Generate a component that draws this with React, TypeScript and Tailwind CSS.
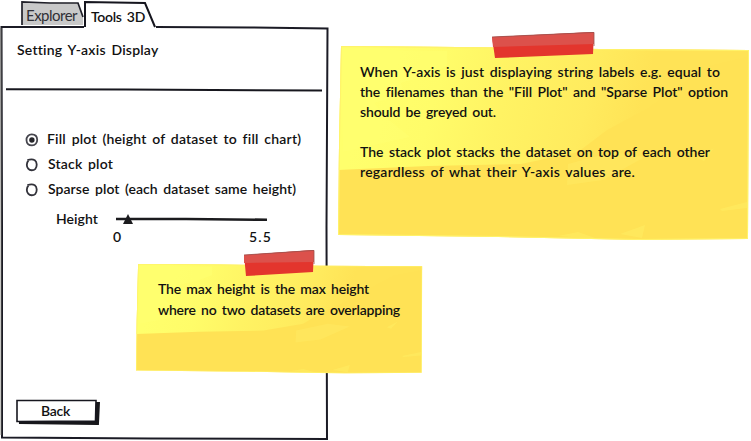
import { useLayoutEffect, useRef, useState, type ReactNode } from "react";

/* A single line of text tracked out to the given width. */
function Line({ w, className = "", children }: { w: number; className?: string; children: string }) {
  const ref = useRef<HTMLSpanElement>(null);
  const [tracking, setTracking] = useState(0);
  useLayoutEffect(() => {
    const natural = ref.current!.getBoundingClientRect().width;
    setTracking((t) => t + (w - natural) / children.length);
  }, [w, children]);
  return (
    <div className={`whitespace-nowrap ${className}`}>
      <span ref={ref} style={{ letterSpacing: tracking }}>{children}</span>
    </div>
  );
}

function Radio({ checked = false }: { checked?: boolean }) {
  return (
    <svg className="relative top-px h-[14px] w-[14px] shrink-0" viewBox="0 0 14 14" fill="none">
      {checked ? (
        <>
          <path d="M6.8 1.3C3.5 1.3 1.2 4 1.5 7.2c.2 3.2 2.4 5.2 5.5 5.2 3.2 0 5.3-2.5 5.2-5.6C12.1 3.5 10 1.3 6.800 1.3Z" stroke="#45454d" strokeWidth="1.8" />
          <circle cx="6.9" cy="7" r="2.7" fill="#25252a" />
        </>
      ) : (
        <path d="M2.4 2.200C5 1.2 8 1.100 9.800 2.200c2.300 1.700 2.500 6.300.6 8.600-2 2-5.500 1.900-7.200-.1C1.200 8.500 1.500 4.700 3.500 2.400" stroke="#33333b" strokeWidth="1.800" />
      )}
    </svg>
  );
}

function Note({ id, tape, className, children }: { id: string; tape: ReactNode; className: string; children: ReactNode }) {
  return (
    <section className={`relative ${className}`}>
      <svg className="absolute inset-0 h-full w-full overflow-visible" viewBox="0 0 412 195" preserveAspectRatio="none">
        <defs>
          <linearGradient id={`${id}-glow`} gradientUnits="userSpaceOnUse" x1="30" y1="40" x2="290" y2="110">
            <stop offset="0" stopColor="#ffff6c" />
            <stop offset="0.250" stopColor="#fffc69" />
            <stop offset="0.500" stopColor="#fff363" />
            <stop offset="0.800" stopColor="#ffeb5e" />
            <stop offset="1" stopColor="#ffe356" />
          </linearGradient>
          <clipPath id={`${id}-sheet`}>
            <path d="M3 0 120 1 262 3 411 4 410 193 300 194 160 191 0 189 1 100Z" />
          </clipPath>
        </defs>
        <g clipPath={`url(#${id}-sheet)`}>
          <rect width="412" height="195" fill="#ffe255" />
          <path d="M0 0H412V10L370 20 340 40 310 62 269 84 240 106 183 118 90 120 0 124Z" fill={`url(#${id}-glow)`} />
          <path d="M3 3 109 5 109 20 90 29 63 37 66 49 36 57 50 73 72 91 41 98 5 106Z" fill="#ffff70" fillOpacity="0.6" />
          <path d="M230 118 275 106 307 111 265 134 229 139Z" fill="#ffe961" fillOpacity="0.6" />
          <path d="M382 163 409 156 409 162 384 165ZM282 188 307 179 304 192ZM220 190 240 186 260 193ZM360 112 376 102 366 115Z" fill="#ffec61" fillOpacity="0.6" />
          <path d="M3 0 1 100 0 189 160 191 300 194 410 193 411 4 262 3Z" fill="none" stroke="#fff36b" strokeWidth="2" />
        </g>
      </svg>
      {tape}
      <div className="relative">{children}</div>
    </section>
  );
}

export default function App() {
  return (
    <main className="relative flex h-[441px] w-[751px] overflow-hidden bg-white font-['Lato','Open_Sans',sans-serif] text-[14px] leading-5 font-semibold text-[#111] [word-spacing:2px]">
      <div className="flex w-[338px] shrink-0 flex-col">
        <nav className="flex h-[27px] pl-[21px]">
          <div className="relative h-[25px] w-[63px]">
            <svg className="absolute inset-0 overflow-visible" width="63" height="25" fill="none">
              <path d="M1 2 57 3 62 15V25H1Z" fill="#c9c9c9" />
              <path d="M1 25V2L29 3 57 3 62 17" stroke="#202029" strokeWidth="1.700" />
            </svg>
            <Line w={51} className="relative pt-[5px] pl-[5px] text-[15px] font-normal text-[#303036]">Explorer</Line>
          </div>
          <div className="relative h-[27px] w-[73px]">
            <svg className="absolute inset-0 overflow-visible" width="73" height="27" fill="none">
              <path d="M1 27V2L61 3 71 27" fill="white" stroke="#15151e" strokeWidth="2" />
            </svg>
            <Line w={54} className="relative pt-[7px] pl-[7px]">Tools 3D</Line>
          </div>
        </nav>
        <section className="relative h-[414px] w-[329px]">
          <svg className="absolute inset-0 overflow-visible" width="329" height="414" fill="none" stroke="#1b1b25" strokeWidth="2">
            <path d="M84 0 1.500 0 2 200 2 410.500 150 411.500 327 412 326.500 200 327.500 1.500 250 .5 156 0" />
            <path d="M1 1V408" stroke="#73736c" strokeWidth="0.800" />
          </svg>
          <header className="relative pt-[13px] pl-[17px]">
            <Line w={141}>Setting Y-axis Display</Line>
          </header>
          <svg className="relative mt-[28px] ml-[6px] block" width="317" height="4" fill="none">
            <path d="M0 1.200 120 1.500 316 2.500" stroke="#17171e" strokeWidth="2" />
          </svg>
          <div className="relative mt-[37px] flex flex-col gap-[5px] pl-[25px]">
            <label className="flex items-center gap-[8px]"><Radio checked /><Line w={254}>Fill plot (height of dataset to fill chart)</Line></label>
            <label className="flex items-center gap-[9px]"><Radio /><Line w={65}>Stack plot</Line></label>
            <label className="flex items-center gap-[9px]"><Radio /><Line w={248}>Sparse plot (each dataset same height)</Line></label>
          </div>
          <div className="relative mt-[10px] flex h-5 items-center pl-[56px]">
            <Line w={42}>Height</Line>
            <svg className="ml-[18px]" width="152" height="14" fill="none">
              <path d="M0 7 70 7 151 7.800" stroke="#1b1b1e" strokeWidth="2.600" />
              <path d="M12 2 17 12H7Z" fill="#1b1b1e" />
            </svg>
          </div>
          <div className="relative -mt-[2px] flex justify-between pr-[57px] pl-[113px]">
            <Line w={9}>0</Line><Line w={23}>5.5</Line>
          </div>
          <button className="relative mt-[152px] ml-[16px] block h-[26px] w-[84px]">
            <svg className="absolute inset-0" width="84" height="26" fill="none">
              <path d="M3 23 81 24 82 3" stroke="#17171b" strokeWidth="4" />
              <path d="M1 1.500 80 1.500 79.500 22 1 22.500Z" fill="white" stroke="#17171f" strokeWidth="1.600" />
            </svg>
            <Line w={29} className="relative -top-px pl-[25px] text-left">Back</Line>
          </button>
        </section>
      </div>
      <Note
        id="axis"
        className="mt-[46px] h-[195px] w-[412px] shrink-0 pt-[16px] pl-[22px]"
        tape={
          <svg className="absolute -top-[14px] left-[154px]" width="103" height="27" fill="none">
            <path d="M0 5 102 0 101 22 3 26Z" fill="#e3352d" />
            <path d="M0 5 102 0 102 12 1 15Z" fill="#dc514b" />
            <path d="M0 5 102 .4V14" stroke="#99504c" strokeWidth="0.8" />
          </svg>
        }
      >
        <Line w={360}>When Y-axis is just displaying string labels e.g. equal to</Line>
        <Line w={368}>the filenames than the "Fill Plot" and "Sparse Plot" option</Line>
        <Line w={136}>should be greyed out.</Line>
        <Line w={350} className="mt-5">The stack plot stacks the dataset on top of each other</Line>
        <Line w={275}>regardless of what their Y-axis values are.</Line>
      </Note>
      <Note
        id="height"
        className="!absolute top-[264px] left-[136px] h-[110px] w-[287px] pt-[15px] pl-[22px]"
        tape={
          <svg className="absolute -top-[14px] left-[107px]" width="72" height="27" fill="none">
            <path d="M1 5 71 0 70 22 3 26Z" fill="#e3352d" />
            <path d="M1 5 71 0V12L1 13Z" fill="#dc514b" />
            <path d="M1 5 71 .4V14" stroke="#99504c" strokeWidth="0.8" />
          </svg>
        }
      >
        <Line w={211}>The max height is the max height</Line>
        <Line w={242} className="mt-px">where no two datasets are overlapping</Line>
      </Note>
    </main>
  );
}
